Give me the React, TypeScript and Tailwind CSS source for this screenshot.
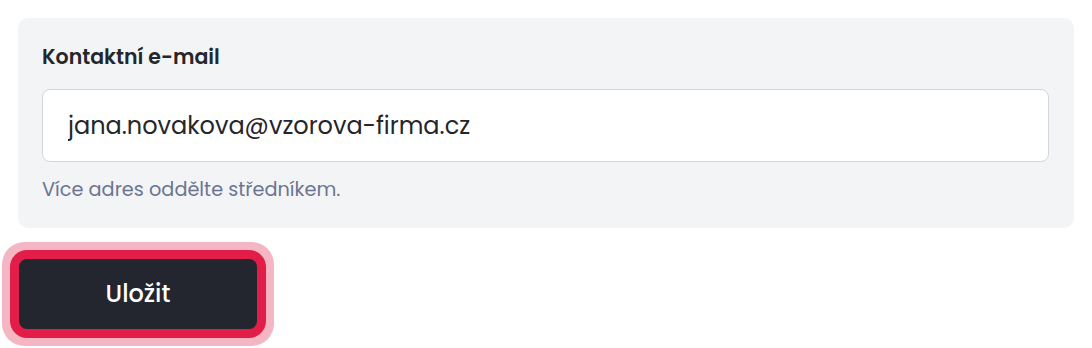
import { useState } from "react";

export default function App() {
    const [email, setEmail] = useState("jana.novakova@vzorova-firma.cz");

    return (
        <div className="min-h-screen bg-white p-[18px]" style={{ fontFamily: "Poppins, Inter, 'Noto Sans', sans-serif" }}>
            <div className="w-[1056px] rounded-[10px] bg-[#f3f4f6] px-6 pt-[23px] pb-[24px]">
                <label className="block text-[20.5px] leading-[31px] font-semibold text-[#25262b]">
                    Kontaktní e-mail
                </label>
                <input
                    type="email"
                    value={email}
                    onChange={(e) => setEmail(e.target.value)}
                    className="mt-[17px] block h-[73px] w-[1007px] rounded-[8px] border border-[#d4d6dc] bg-white px-[25px] text-[24px] text-[#24262b] outline-none"
                />
                <p className="mt-[13px] text-[19.3px] leading-[29px] text-[#6b7590]">
                    Více adres oddělte středníkem.
                </p>
            </div>

            <button
                type="button"
                className="ml-px mt-[31px] flex h-[70px] w-[238px] items-center justify-center rounded-[8px] bg-[#23262f] text-[24px] font-medium text-white shadow-[0_0_0_9px_#e11d48,0_0_0_17px_rgba(225,29,72,0.32)]"
            >
                Uložit
            </button>
        </div>
    );
}
